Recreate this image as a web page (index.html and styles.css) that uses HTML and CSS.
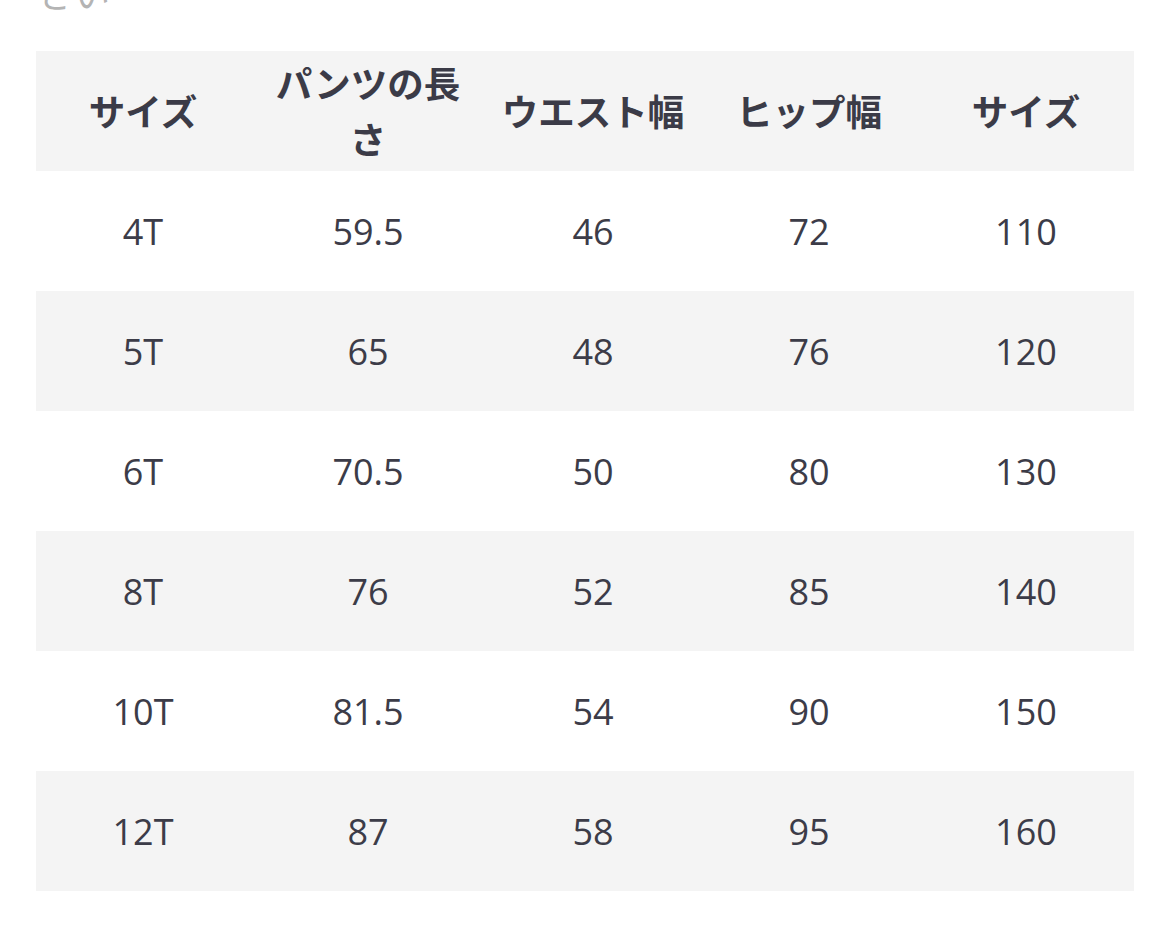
FILE: index.html
```html
<!DOCTYPE html>
<html lang="ja">
<head>
<meta charset="utf-8">
<link rel="stylesheet" href="styles.css">
</head>
<body>
<div class="page">
  <p class="lead">さい</p>
  <table class="size-table">
    <colgroup>
      <col class="c1"><col class="c2"><col class="c3"><col class="c4"><col class="c5">
    </colgroup>
    <thead>
      <tr><th>サイズ</th><th>パンツの長<br>さ</th><th>ウエスト幅</th><th>ヒップ幅</th><th>サイズ</th></tr>
    </thead>
    <tbody>
      <tr><td>4T</td><td>59.5</td><td>46</td><td>72</td><td>110</td></tr>
      <tr><td>5T</td><td>65</td><td>48</td><td>76</td><td>120</td></tr>
      <tr><td>6T</td><td>70.5</td><td>50</td><td>80</td><td>130</td></tr>
      <tr><td>8T</td><td>76</td><td>52</td><td>85</td><td>140</td></tr>
      <tr><td>10T</td><td>81.5</td><td>54</td><td>90</td><td>150</td></tr>
      <tr><td>12T</td><td>87</td><td>58</td><td>95</td><td>160</td></tr>
    </tbody>
  </table>
</div>
</body>
</html>
```
FILE: styles.css
```css
html, body {
  margin: 0;
  padding: 0;
  background: #ffffff;
}
body {
  font-family: "Open Sans", "Noto Sans CJK JP", sans-serif;
  color: #3c3c48;
  overflow: hidden;
}
.page {
  padding: 0 36px;
}
.lead {
  margin: -36px 0 0 2px;
  font-family: "Noto Sans CJK JP", sans-serif;
  font-size: 36px;
  line-height: 56px;
  color: #b4b4b4;
}
.size-table {
  margin-top: 31px;
  width: 1098px;
  border-collapse: collapse;
  table-layout: fixed;
}
.c1 { width: 214px; }
.c2 { width: 236px; }
.c3 { width: 214px; }
.c4 { width: 218px; }
.c5 { width: 216px; }
.size-table th {
  height: 120px;
  padding: 0 4px;
  box-sizing: border-box;
  background: #f4f4f4;
  font-family: "Noto Sans CJK JP", sans-serif;
  font-weight: 700;
  font-size: 36.5px;
  line-height: 56px;
  color: #3b3b47;
  text-align: center;
  vertical-align: middle;
  white-space: nowrap;
}
.size-table td {
  height: 120px;
  padding: 0 10px;
  box-sizing: border-box;
  font-size: 36px;
  text-align: center;
  vertical-align: middle;
  color: #3c3c48;
}
.size-table tbody tr:nth-child(even) td {
  background: #f4f4f4;
}
```
